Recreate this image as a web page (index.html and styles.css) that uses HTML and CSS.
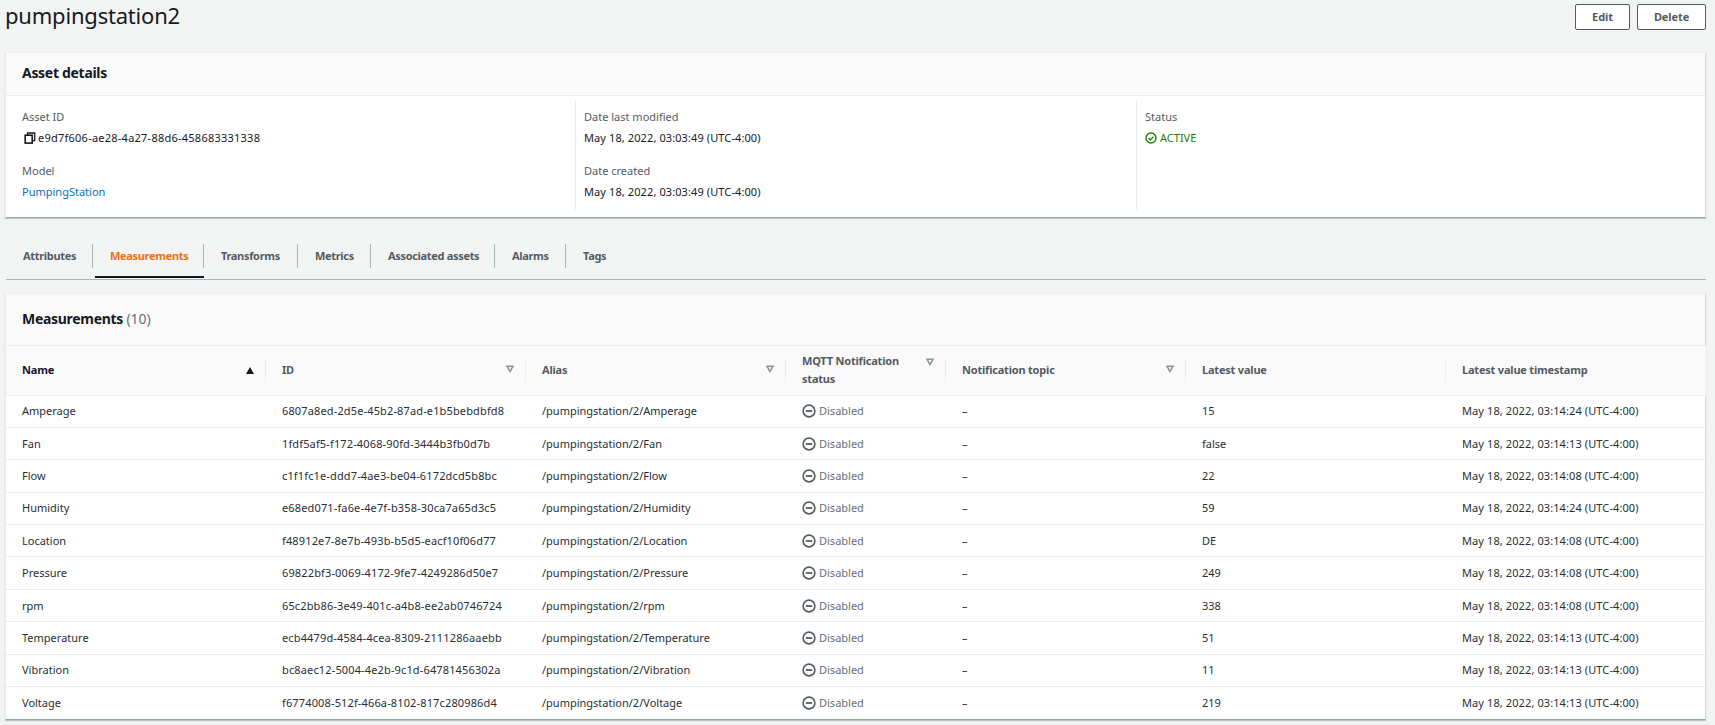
FILE: index.html
```html
<!DOCTYPE html>
<html lang="en">
<head>
<meta charset="utf-8">
<title>pumpingstation2</title>
<link rel="stylesheet" href="styles.css">
</head>
<body>
<svg class="defs" width="0" height="0" aria-hidden="true">
  <symbol id="minus" viewBox="0 0 14 14"><circle cx="7" cy="7" r="5.9" fill="none" stroke="#545b64" stroke-width="1.6"/><path d="M3.8 7h6.4" stroke="#545b64" stroke-width="1.8"/></symbol>
  <symbol id="tri" viewBox="0 0 8 8"><path d="M1 1.2h6L4 6.6z" fill="none" stroke="#879596" stroke-width="1.5"/></symbol>
</svg>
<header class="page-head">
  <h1>pumpingstation2</h1>
  <div class="actions"><button class="btn btn-edit">Edit</button><button class="btn btn-delete">Delete</button></div>
</header>
<section class="card details">
  <h2 class="card-head">Asset details</h2>
  <div class="detail-grid">
    <div class="detail-col">
      <div class="label">Asset ID</div>
      <div class="value asset-id"><svg class="copy" viewBox="0 0 12 12"><path d="M3.5 3V1h7.2v7.6H8.5" fill="none" stroke="#16191f" stroke-width="1.3"/><rect x="1.2" y="3.2" width="7" height="7.9" fill="none" stroke="#16191f" stroke-width="1.6"/></svg>e9d7f606-ae28-4a27-88d6-458683331338</div>
      <div class="label">Model</div>
      <div class="value"><a class="link">PumpingStation</a></div>
    </div>
    <div class="detail-col sep">
      <div class="label">Date last modified</div>
      <div class="value date">May 18, 2022, 03:03:49 (UTC-4:00)</div>
      <div class="label">Date created</div>
      <div class="value date">May 18, 2022, 03:03:49 (UTC-4:00)</div>
    </div>
    <div class="detail-col sep">
      <div class="label">Status</div>
      <div class="value active"><svg class="check" viewBox="0 0 14 14"><circle cx="7" cy="7" r="5.8" fill="none" stroke="#1d8102" stroke-width="1.7"/><path d="M4.2 7l2.1 2.2 3.5-3.8" fill="none" stroke="#1d8102" stroke-width="1.7"/></svg>ACTIVE</div>
    </div>
  </div>
</section>
<nav class="tabs">
  <a class="tab tab-attr">Attributes</a>
  <a class="tab tab-meas is-active">Measurements</a>
  <a class="tab tab-trans">Transforms</a>
  <a class="tab tab-metr">Metrics</a>
  <a class="tab tab-assoc">Associated assets</a>
  <a class="tab tab-alarm">Alarms</a>
  <a class="tab tab-tags">Tags</a>
</nav>
<section class="card measurements">
  <h2 class="card-head">Measurements <span class="count">(10)</span></h2>
  <table>
    <colgroup><col class="c260"><col class="c260"><col class="c260"><col class="c160"><col class="c240"><col class="c260"><col class="c260"></colgroup>
    <thead>
      <tr>
        <th class="sorted"><div class="th"><span class="th-text">Name</span><span class="sort-up"></span></div></th>
        <th><div class="th"><span class="th-text">ID</span><svg class="tri"><use href="#tri"/></svg></div></th>
        <th><div class="th"><span class="th-text">Alias</span><svg class="tri"><use href="#tri"/></svg></div></th>
        <th><div class="th"><span class="th-text">MQTT Notification status</span><svg class="tri tri-top"><use href="#tri"/></svg></div></th>
        <th><div class="th"><span class="th-text">Notification topic</span><svg class="tri"><use href="#tri"/></svg></div></th>
        <th><div class="th"><span class="th-text">Latest value</span></div></th>
        <th><div class="th th-last"><span class="th-text">Latest value timestamp</span></div></th>
      </tr>
    </thead>
    <tbody>
      <tr><td>Amperage</td><td class="uuid">6807a8ed-2d5e-45b2-87ad-e1b5bebdbfd8</td><td>/pumpingstation/2/Amperage</td><td class="dis"><svg class="minus"><use href="#minus"/></svg>Disabled</td><td>–</td><td>15</td><td class="stamp">May 18, 2022, 03:14:24 (UTC-4:00)</td></tr>
      <tr><td>Fan</td><td class="uuid">1fdf5af5-f172-4068-90fd-3444b3fb0d7b</td><td>/pumpingstation/2/Fan</td><td class="dis"><svg class="minus"><use href="#minus"/></svg>Disabled</td><td>–</td><td>false</td><td class="stamp">May 18, 2022, 03:14:13 (UTC-4:00)</td></tr>
      <tr><td>Flow</td><td class="uuid">c1f1fc1e-ddd7-4ae3-be04-6172dcd5b8bc</td><td>/pumpingstation/2/Flow</td><td class="dis"><svg class="minus"><use href="#minus"/></svg>Disabled</td><td>–</td><td>22</td><td class="stamp">May 18, 2022, 03:14:08 (UTC-4:00)</td></tr>
      <tr><td>Humidity</td><td class="uuid">e68ed071-fa6e-4e7f-b358-30ca7a65d3c5</td><td>/pumpingstation/2/Humidity</td><td class="dis"><svg class="minus"><use href="#minus"/></svg>Disabled</td><td>–</td><td>59</td><td class="stamp">May 18, 2022, 03:14:24 (UTC-4:00)</td></tr>
      <tr><td>Location</td><td class="uuid">f48912e7-8e7b-493b-b5d5-eacf10f06d77</td><td>/pumpingstation/2/Location</td><td class="dis"><svg class="minus"><use href="#minus"/></svg>Disabled</td><td>–</td><td>DE</td><td class="stamp">May 18, 2022, 03:14:08 (UTC-4:00)</td></tr>
      <tr><td>Pressure</td><td class="uuid">69822bf3-0069-4172-9fe7-4249286d50e7</td><td>/pumpingstation/2/Pressure</td><td class="dis"><svg class="minus"><use href="#minus"/></svg>Disabled</td><td>–</td><td>249</td><td class="stamp">May 18, 2022, 03:14:08 (UTC-4:00)</td></tr>
      <tr><td>rpm</td><td class="uuid">65c2bb86-3e49-401c-a4b8-ee2ab0746724</td><td>/pumpingstation/2/rpm</td><td class="dis"><svg class="minus"><use href="#minus"/></svg>Disabled</td><td>–</td><td>338</td><td class="stamp">May 18, 2022, 03:14:08 (UTC-4:00)</td></tr>
      <tr><td>Temperature</td><td class="uuid">ecb4479d-4584-4cea-8309-2111286aaebb</td><td>/pumpingstation/2/Temperature</td><td class="dis"><svg class="minus"><use href="#minus"/></svg>Disabled</td><td>–</td><td>51</td><td class="stamp">May 18, 2022, 03:14:13 (UTC-4:00)</td></tr>
      <tr><td>Vibration</td><td class="uuid">bc8aec12-5004-4e2b-9c1d-64781456302a</td><td>/pumpingstation/2/Vibration</td><td class="dis"><svg class="minus"><use href="#minus"/></svg>Disabled</td><td>–</td><td>11</td><td class="stamp">May 18, 2022, 03:14:13 (UTC-4:00)</td></tr>
      <tr><td>Voltage</td><td class="uuid">f6774008-512f-466a-8102-817c280986d4</td><td>/pumpingstation/2/Voltage</td><td class="dis"><svg class="minus"><use href="#minus"/></svg>Disabled</td><td>–</td><td>219</td><td class="stamp">May 18, 2022, 03:14:13 (UTC-4:00)</td></tr>
    </tbody>
  </table>
</section>
</body>
</html>
```
FILE: styles.css
```css
* { box-sizing: border-box; }
html, body { margin: 0; padding: 0; }
body {
  background: #f2f3f3;
  color: #16191f;
  font-family: "Noto Sans", "Open Sans", sans-serif;
  font-size: 11px;
  line-height: 16px;
  overflow: hidden;
  height: 725px;
}
.defs { position: absolute; }
.page-head {
  display: flex;
  justify-content: space-between;
  height: 52px;
  padding: 4px 9px 0 5px;
}
h1 {
  margin: -5px 0 0;
  font-size: 22px;
  line-height: 32px;
  font-weight: 400;
  letter-spacing: -.2px;
}
.actions { display: flex; gap: 7px; }
.btn {
  height: 26px;
  background: #fff;
  border: 1px solid #545b64;
  border-radius: 2px;
  color: #545b64;
  font: 700 11px/16px "Noto Sans", sans-serif;
  letter-spacing: -.1px;
  padding: 0;
}
.btn-edit { width: 55px; }
.btn-delete { width: 69px; }
.card {
  margin: 0 9px 0 5px;
  background: #fff;
  border: 1px solid #eaeded;
  border-bottom-color: #95a5a6;
  border-right-color: #d5dbdb;
  box-shadow: 0 1px 1px rgba(0, 28, 36, .2);
}
.card-head {
  margin: 0;
  background: #fafafa;
  border-bottom: 1px solid #eaeded;
  font-size: 14px;
  line-height: 20px;
  font-weight: 700;
  letter-spacing: -.3px;
  padding: 10px 16px 0;
  height: 43px;
}
.details { height: 166px; }
.detail-grid {
  display: grid;
  grid-template-columns: repeat(3, 561px);
  padding: 5px 0 0 8px;
}
.detail-col { height: 109px; padding: 8px 0 0 8px; }
.detail-col.sep { border-left: 1px solid #eaeded; }
.label { color: #545b64; height: 16px; margin-bottom: 5px; }
.value { height: 16px; margin-bottom: 17px; display: flex; align-items: center; }
.asset-id { letter-spacing: .24px; }
.date { letter-spacing: .1px; }
.link { color: #0073bb; }
.copy { width: 12px; height: 12px; margin: 0 2px 0 2px; }
.active { color: #1d8102; }
.check { width: 12px; height: 12px; margin-right: 3px; }
.tabs {
  display: flex;
  margin: 0 9px 0 6px;
  height: 62px;
  padding-top: 26px;
  border-bottom: 1px solid #aab7b8;
}
.tab {
  height: 24px;
  line-height: 24px;
  font-weight: 700;
  letter-spacing: -.32px;
  color: #545b64;
  border-right: 1px solid #aab7b8;
  padding-left: 17px;
  position: relative;
}
.tab-attr { width: 87px; }
.tab-meas { width: 111px; }
.tab-trans { width: 94px; }
.tab-metr { width: 73px; }
.tab-assoc { width: 124px; }
.tab-alarm { width: 71px; }
.tab-tags { border-right: 0; }
.is-active { color: #ec7211; }
.is-active::after {
  content: "";
  position: absolute;
  left: 2px;
  right: -1px;
  bottom: -10px;
  height: 2px;
  background: #16191f;
}
.measurements { margin-top: 13px; }
.measurements .card-head { height: 52px; padding: 15px 16px 0; }
.count { font-weight: 400; color: #687078; letter-spacing: 0; }
table {
  width: 1700px;
  table-layout: fixed;
  border-collapse: collapse;
  font-size: 11px;
}
.c260 { width: 260px; }
.c160 { width: 160px; }
.c240 { width: 240px; }
th {
  background: #fafafa;
  padding: 0;
  height: 49px;
  border-bottom: 1px solid #eaeded;
  text-align: left;
  color: #545b64;
  font-weight: 700;
  letter-spacing: -.2px;
}
th.sorted { color: #16191f; }
.th {
  display: flex;
  align-items: center;
  justify-content: space-between;
  height: 24px;
  padding: 0 11px 0 16px;
  border-right: 1px solid #eaeded;
}
.th-last { border-right: 0; }
.th-text { line-height: 18px; }
.tri { width: 8px; height: 8px; flex: none; margin-bottom: 2px; }
.tri-top { align-self: flex-start; margin-top: 0; }
.sort-up {
  width: 0;
  height: 0;
  border: 4px solid transparent;
  border-top: 0;
  border-bottom: 7px solid #16191f;
}
td {
  height: 32.4px;
  padding: 0 0 0 16px;
  border-bottom: 1px solid #eaeded;
  color: #2a2e33;
  white-space: nowrap;
}
tbody tr:last-child td { border-bottom: 0; }
.uuid { letter-spacing: .14px; }
.stamp { letter-spacing: .1px; }
.dis { color: #687078; }
.minus { width: 14px; height: 14px; margin-right: 3px; vertical-align: -3px; }
```
